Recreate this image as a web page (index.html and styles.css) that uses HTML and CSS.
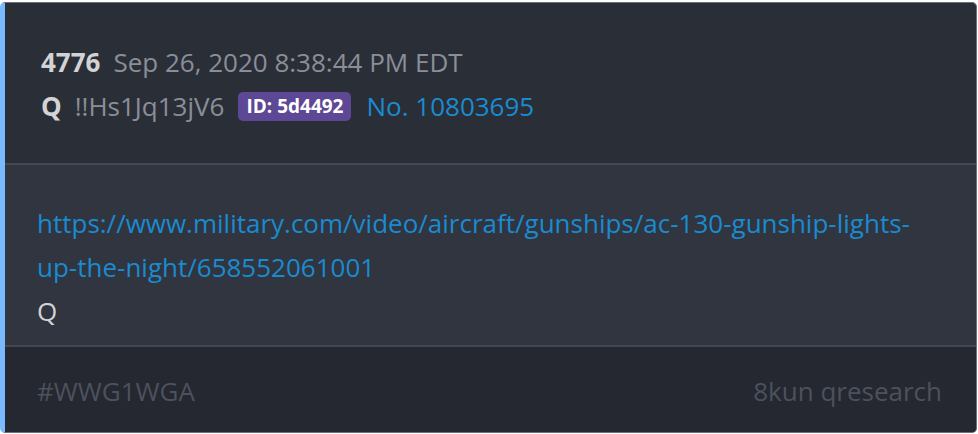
FILE: index.html
```html
<!DOCTYPE html>
<html>
<head>
<meta charset="utf-8">
<link rel="stylesheet" href="styles.css">
</head>
<body>
<div class="card">
  <div class="head">
    <div class="line"><span class="num">4776</span><span class="date">Sep 26, 2020 8:38:44 PM EDT</span></div>
    <div class="line"><span class="name">Q</span><span class="trip">!!Hs1Jq13jV6</span><span class="badge">ID: 5d4492</span><span class="no">No. 10803695</span></div>
  </div>
  <div class="body">
    <a class="link" href="#">https://www.military.com/video/aircraft/gunships/ac-130-gunship-lights-up-the-night/658552061001</a>
    <div class="text">Q</div>
  </div>
  <div class="foot">
    <span>#WWG1WGA</span>
    <span>8kun qresearch</span>
  </div>
</div>
</body>
</html>
```
FILE: styles.css
```css
html, body {
  margin: 0;
  padding: 0;
  background: #ffffff;
}
body {
  padding-top: 2px;
  font-family: "Open Sans", "Noto Sans", sans-serif;
  font-size: 26px;
  line-height: 44px;
}
.card {
  width: 977px;
  height: 431px;
  box-sizing: border-box;
  border: 1px solid #6c707c;
  border-left: 5px solid #7ab8ff;
  border-radius: 5px;
  background: #2a2e37;
  display: flex;
  flex-direction: column;
  overflow: hidden;
}
.head {
  padding: 37px 32px 35px 36px;
  border-bottom: 2px solid #434853;
}
.line {
  display: flex;
  align-items: center;
  white-space: nowrap;
}
.num {
  font-weight: 700;
  color: #d2d3d6;
  margin-right: 13px;
}
.date { color: #8a8e99; }
.name {
  font-weight: 700;
  color: #d2d3d6;
  margin-right: 13px;
}
.trip {
  color: #8a8e99;
  margin-right: 14px;
}
.badge {
  background: #5d4895;
  color: #ffffff;
  font-weight: 700;
  font-size: 19px;
  line-height: 29px;
  padding: 0 8px;
  border-radius: 5px;
  margin-right: 15px;
}
.no { color: #1a8bd0; }
.body {
  background: #30353f;
  padding: 36px 32px 12px;
  border-bottom: 2px solid #434853;
}
.link {
  color: #1a8bd0;
  text-decoration: none;
  display: block;
}
.text { color: #d2d3d6; }
.foot {
  flex: 1;
  background: #252830;
  display: flex;
  justify-content: space-between;
  padding: 22px 34px 0 32px;
  color: #4c515d;
}
```
